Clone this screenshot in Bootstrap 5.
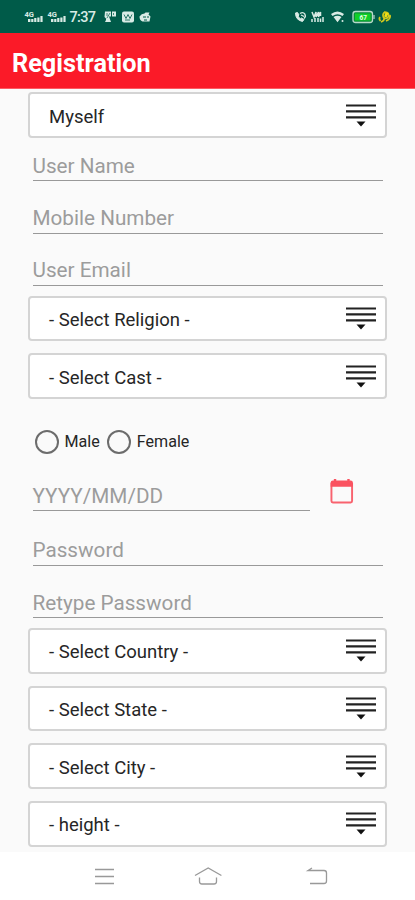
<!DOCTYPE html>
<html lang="en">
<head>
<meta charset="utf-8">
<meta name="viewport" content="width=device-width, initial-scale=1">
<title>Registration</title>
<link href="https://cdn.jsdelivr.net/npm/bootstrap@5.3.0/dist/css/bootstrap.min.css" rel="stylesheet">
<style>
body{font-family:Roboto,"Liberation Sans",sans-serif;background:#fafafa;color:#262626;height:900px;overflow:hidden}
.statusbar{height:32.5px;background:#005b49}
.appbar{height:56.7px;background:#fb1a28;border-bottom:1px solid #fd5a62;padding:8px 12px 0}
.appbar h1{font-size:25.3px;font-weight:700;line-height:30px}
.form-area{padding:3px 28px 0 28px;height:763px}
.picker{height:45.6px;border:2px solid #d4d4d4;border-radius:4px;background:#fff;padding:3px 9px 0 19px;font-size:18.5px;line-height:24px}
.picker+.picker{margin-top:12.1px}
.picker.top-pick{padding-top:5px}
.picker svg{margin-top:-3px}
.entry{height:52.4px;margin:0 4.5px;border-bottom:1.5px solid #999;color:#9c9c9c;font-size:20.7px;line-height:24px;padding-bottom:2.6px}
.entry.first-entry{height:43.5px}
.entry.pass{height:54.5px}
.gap-pick{margin-top:9.6px}
.gender{height:84px;padding:2px 0 0 6.5px;font-size:16.1px}
.dot{width:24px;height:24px;border:2px solid #6c6c6c;border-radius:50%;margin-right:6px}
.dot.second{margin-left:7px}
.dob{height:28.5px}
.dob .entry{width:277px;height:28.5px}
.dob svg{margin:0 0 7px 16px}
.navkeys{height:48px;background:#fff}
</style>
</head>
<body>
<div class="statusbar">
<svg class="d-block" width="415" height="32" viewBox="0 0 415 32" fill="#d9ebe5" font-family="Roboto, sans-serif">
<g id="signal"><text x="24.500" y="16.500" font-size="7.500" font-weight="700">4G</text><path d="M28 19h2.400v3H28zM31.200 19h2.200v3h-2.200zM34.200 18h2.200v4h-2.200zM37.300 17.500h2.200v4.500h-2.200zM40.400 16h2.200v6h-2.200z"/></g>
<use href="#signal" x="23"/>
<text x="69.500" y="22" font-size="14.500" font-weight="500" textLength="26.500">7:37</text>
<path d="M105 11.500h6v5h-2l2 5.500h-6l1.500-3-2-2z"/><path d="M112 11.500h4v5h-4zM106 19h3v3h-3z"/><path d="M107 13v3M110 13l-3 5M113.500 13v2" stroke="#005b49" stroke-width=".7"/>
<rect x="122" y="11.500" width="12" height="11" rx="2"/><path d="M124 14.500l2 4 2-4 2 4 2-4M125 20h5" stroke="#005b49" fill="none" stroke-width=".8"/>
<path d="M139.500 16.500q2-3 5-3l1-1h4l-1 2 2 2-1 5h-7q-3-1-3-5z"/><path d="M143 17h3m1 0h2M144 20h3" stroke="#005b49"/>
<path d="M295.500 13q0 7 7 8.500l1.500-2-2.500-1.500-1 .7q-2-1-2.500-2.700l1-1-1.500-2.500z" stroke="#d9ebe5"/><path d="M300 13.500q3-2 4.800.5 1.500 2.500-.8 4.500M301 15l3 1.500" fill="none" stroke="#d9ebe5" stroke-width="1.300"/>
<path d="M312 12l2 5 2-5v5l2.500-5v5l2-5v4M312 22v-3m3 3v-4m3 4v-4m2.500 4v-3.500m2.500 3.500v-5" fill="none" stroke="#d9ebe5" stroke-width="1.500"/>
<path d="M331 14q6.500-5 13 0l-1.500 2q-5-3.500-10 0zM333.500 17q4-2.500 8 0l-4 5.200z"/><circle cx="342.500" cy="21" r="1"/>
<rect x="353" y="11.500" width="19.500" height="11" rx="2.500" fill="#0a8d38" stroke="#b8d9ca" stroke-width="1.300"/><path d="M373.500 15h1v4h-1z"/><rect x="355" y="13.500" width="15.500" height="7" fill="#10cf27"/><text x="359.500" y="19.500" font-size="6.500" font-weight="700" fill="#e8ffe8">67</text>
<path d="M380 17q-1.500 2 .5 4M384 17.500q1 3-3 4.500M385 12q-3 2-1.500 5.500 3 2 5-1 1-4-3.500-4.500zM390 15q1 4-4 6" fill="none" stroke="#d2c91c" stroke-width="1.700"/><path d="M385.500 12.500l3 1-2 4-2.500-1z" fill="#f2df12"/>
</svg>
</div>
<header class="appbar d-flex align-items-center text-white"><h1 class="m-0">Registration</h1></header>
<svg class="d-none"><defs>
<g id="lines-drop"><path d="M0 1.500h30M0 7.400h30M0 13.300h30" stroke="#222" stroke-width="2.200"/><path d="M10.500 17.500h9L15 22.500z" fill="#111"/></g>
</defs></svg>
<main class="form-area">
<div class="picker top-pick d-flex align-items-center justify-content-between"><span>Myself</span><svg width="30" height="23"><use href="#lines-drop"/></svg></div>
<div class="entry first-entry d-flex align-items-end">User Name</div>
<div class="entry d-flex align-items-end">Mobile Number</div>
<div class="entry d-flex align-items-end">User Email</div>
<div class="gap-pick"></div>
<div class="picker d-flex align-items-center justify-content-between"><span>- Select Religion -</span><svg width="30" height="23"><use href="#lines-drop"/></svg></div>
<div class="picker d-flex align-items-center justify-content-between"><span>- Select Cast -</span><svg width="30" height="23"><use href="#lines-drop"/></svg></div>
<div class="gender d-flex align-items-center"><span class="dot"></span><span>Male</span><span class="dot second"></span><span>Female</span></div>
<div class="dob d-flex align-items-end">
<div class="entry d-flex align-items-end">YYYY/MM/DD</div>
<svg width="24" height="25" viewBox="0 0 25 26"><path d="M1.500 4v19q0 1.500 1.500 1.500h18.500q1.500 0 1.500-1.500V4" fill="none" stroke="#f8626e" stroke-width="2"/><path d="M.7 8V3.500Q.7 1.500 3 1.500h1V0h2.500v1.500h11.500V0h2.500v1.500h1q2.300 0 2.300 2V8z" fill="#fa5260"/></svg>
</div>
<div class="entry pass d-flex align-items-end">Password</div>
<div class="entry d-flex align-items-end">Retype Password</div>
<div class="gap-pick"></div>
<div class="picker d-flex align-items-center justify-content-between"><span>- Select Country -</span><svg width="30" height="23"><use href="#lines-drop"/></svg></div>
<div class="picker d-flex align-items-center justify-content-between"><span>- Select State -</span><svg width="30" height="23"><use href="#lines-drop"/></svg></div>
<div class="picker d-flex align-items-center justify-content-between"><span>- Select City -</span><svg width="30" height="23"><use href="#lines-drop"/></svg></div>
<div class="picker d-flex align-items-center justify-content-between"><span>- height -</span><svg width="30" height="23"><use href="#lines-drop"/></svg></div>
</main>
<nav class="navkeys">
<svg class="d-block" width="415" height="48" viewBox="0 852 415 48" fill="none" stroke="#999" stroke-width="1.300">
<path d="M95 869.500h19M95 876.500h19M95 883.500h19"/>
<path d="M195 875.500l13.200-7.500 13.200 7.500M199.500 877.500v4q0 2.500 2.500 2.500h12q2.500 0 2.500-2.500v-4"/>
<path d="M312 868l-4 2.500h16q2.500 0 2.500 2.500v8q0 2.500-2.500 2.500H310"/>
</svg>
</nav>
<script src="https://cdn.jsdelivr.net/npm/bootstrap@5.3.0/dist/js/bootstrap.bundle.min.js"></script>
</body>
</html>
